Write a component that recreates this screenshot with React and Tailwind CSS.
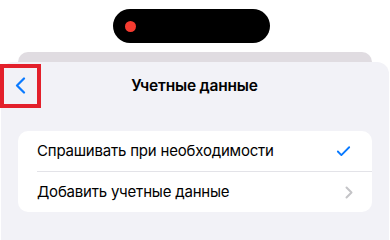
import { Check } from 'lucide-react';

export default function App() {
  return (
    <div className="w-[390px] h-[240px] bg-white overflow-hidden flex flex-col" style={{ fontFamily: 'Inter, "Noto Sans", sans-serif' }}>
      {/* Dynamic island */}
      <div className="h-[52px] pt-[9px] pl-[113px] shrink-0">
        <div className="w-[157px] h-[34px] rounded-full bg-black flex items-center pl-[12px]">
          <div className="w-[11px] h-[11px] rounded-full bg-[#f53b30]"></div>
        </div>
      </div>

      {/* Sheet behind */}
      <div className="mx-[18px] h-[10px] rounded-t-[10px] bg-[#e0dce1] shrink-0"></div>

      {/* Sheet */}
      <div className="flex-1 mx-px rounded-t-[12px] bg-[#f2f2f7] flex flex-col">
        <div className="flex items-center h-[47px]">
          <button className="w-[41px] h-[44px] border-4 border-[#e3202b] flex items-center justify-center shrink-0 -ml-px">
            <svg width="11" height="17" viewBox="0 0 11 17" fill="none">
              <path d="M9 1.5 2 8.5l7 7" stroke="#0a7aff" strokeWidth="2.2" strokeLinecap="round" strokeLinejoin="round" />
            </svg>
          </button>
          <div className="flex-1 text-center text-[15.5px] font-semibold text-black tracking-[-0.2px]">Учетные данные</div>
          <div className="w-[41px] shrink-0"></div>
        </div>

        {/* Card */}
        <div className="mt-[22px] mx-[17px] bg-white rounded-[10px] overflow-hidden">
          <div className="h-[40px] flex items-center pl-[19px] pr-[20px]">
            <span className="flex-1 text-[15px] text-black tracking-[-0.2px]">Спрашивать при необходимости</span>
            <Check className="w-[17px] h-[17px] text-[#0a7aff]" strokeWidth={2.6} />
          </div>
          <div className="ml-[19px] h-px bg-[#e3e3e8]"></div>
          <div className="h-[40px] flex items-center pl-[19px] pr-[19px]">
            <span className="flex-1 text-[15px] text-black tracking-[-0.2px]">Добавить учетные данные</span>
            <svg width="8" height="13" viewBox="0 0 8 13" fill="none">
              <path d="M1.5 1.5 6.5 6.5l-5 5" stroke="#c4c4c7" strokeWidth="2" strokeLinecap="round" strokeLinejoin="round" />
            </svg>
          </div>
        </div>
      </div>
    </div>
  );
}
